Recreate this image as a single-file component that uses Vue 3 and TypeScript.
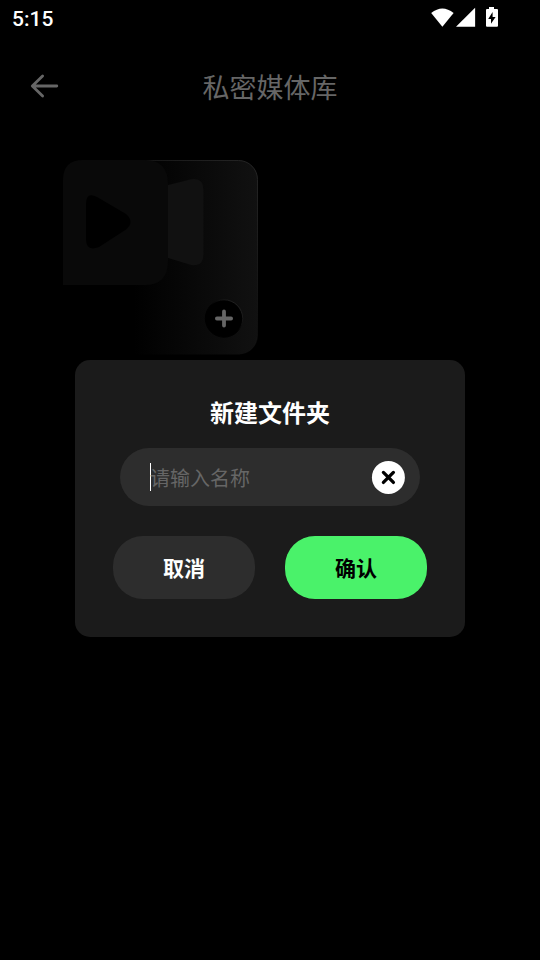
<script setup lang="ts">
import { ref } from 'vue'

const folderName = ref<string>('')

function clearName(): void {
  folderName.value = ''
}
</script>

<template>
  <div class="screen">
    <div class="status-bar">
      <span class="clock">5:15</span>
      <svg class="status-icons" width="68" height="22" viewBox="0 0 68 22" fill="#fff">
        <path d="M12.4 19.8 L1.2 6.1 Q12.4 -2.9 23.6 6.1 Z" />
        <path d="M26 19.8 L45.1 0.8 V19.8 Z" />
        <path
          fill-rule="evenodd"
          d="M59 0.1 h5 v2 h3 q1 0 1 1 V18.8 q0 1 -1 1 H57 q-1 0 -1 -1 V3.1 q0 -1 1 -1 h2 Z M62.6 5 L58.2 11.9 H61 V16.7 L65.6 9.9 H62.6 Z"
        />
      </svg>
    </div>

    <header class="app-bar">
      <svg class="back" width="30" height="26" viewBox="0 0 30 26">
        <path d="M12.6 3 L2.3 13 L12.6 23 M2.6 13 H26.8" fill="none" stroke="#666" stroke-width="2.8" stroke-linecap="round" stroke-linejoin="round" />
      </svg>
      <h1>私密媒体库</h1>
    </header>

    <main class="library">
      <div class="add-card">
        <svg class="artwork" width="195" height="195" viewBox="0 0 195 195">
          <defs>
            <linearGradient id="surface" x1="0" x2="1" y1="0" y2="0">
              <stop offset="0" stop-color="#000" />
              <stop offset="0.36" stop-color="#000" />
              <stop offset="0.7" stop-color="#090909" />
              <stop offset="1" stop-color="#111" />
            </linearGradient>
            <linearGradient id="edge" x1="0" x2="1" y1="1" y2="0">
              <stop offset="0.45" stop-color="#1b1b1b" stop-opacity="0" />
              <stop offset="0.8" stop-color="#1c1c1c" />
              <stop offset="1" stop-color="#252525" />
            </linearGradient>
            <linearGradient id="rim" x1="0" x2="1" y1="1" y2="0">
              <stop offset="0.5" stop-color="#000" />
              <stop offset="1" stop-color="#303030" />
            </linearGradient>
          </defs>
          <rect x="0.5" y="0.5" width="194" height="194" rx="19" fill="url(#surface)" stroke="url(#edge)" />
          <path d="M105 25 L128 19.2 Q140.5 17 140.5 30 V94 Q140.5 107 128 105 L105 98 Z" fill="#111" />
          <path d="M0 20 Q0 0 20 0 H82 Q105 0 105 24 V101 Q105 125 82 125 H0 Z" fill="#090909" />
          <path d="M23 44 Q23 31.5 34 37 L63 54 Q72 62 63 69.5 L36 87 Q23 92 23 79 Z" fill="#000" />
          <circle cx="161" cy="158.5" r="18.7" fill="#000" stroke="url(#rim)" />
          <path d="M161 151.4 V165.6 M153.9 158.5 H168.1" stroke="#656565" stroke-width="3.8" stroke-linecap="round" />
        </svg>
      </div>
    </main>

    <div class="overlay">
      <form class="dialog" role="dialog" @submit.prevent>
        <h2>新建文件夹</h2>
        <div class="field">
          <span class="caret"></span>
          <input v-model="folderName" type="text" placeholder="请输入名称" />
          <button class="clear" type="button" @click="clearName">
            <svg width="34" height="34" viewBox="0 0 34 34">
              <circle cx="17.4" cy="17.4" r="16.5" fill="#fff" />
              <path d="M12.4 12.4 L22.4 22.4 M22.4 12.4 L12.4 22.4" stroke="#000" stroke-width="3.3" stroke-linecap="round" />
            </svg>
          </button>
        </div>
        <div class="actions">
          <button class="action cancel" type="button">取消</button>
          <button class="action confirm" type="submit">确认</button>
        </div>
      </form>
    </div>
  </div>
</template>

<style>
body {
  background: #000;
}
</style>

<style scoped>
.screen {
  position: relative;
  width: 540px;
  height: 960px;
  overflow: hidden;
  background: #000;
  color: #fff;
  font-family: "Noto Sans CJK SC", sans-serif;
}

.screen * {
  box-sizing: border-box;
}

.status-bar {
  display: flex;
  align-items: flex-start;
  justify-content: space-between;
  height: 37px;
  padding: 7px 42px 0 12px;
}

.clock {
  font: 500 21px/24px Roboto, sans-serif;
}

.status-icons {
  display: block;
}

.app-bar {
  display: grid;
  grid-template-columns: 30px 1fr 30px;
  align-items: center;
  height: 98px;
  padding: 0 30px;
}

.back {
  display: block;
}

h1 {
  margin: 0;
  padding-top: 2px;
  color: #666;
  font-size: 27px;
  font-weight: 400;
  line-height: 40px;
  text-align: center;
}

.library {
  padding: 25px 63px;
}

.add-card {
  width: 195px;
  height: 195px;
}

.artwork {
  display: block;
}

.overlay {
  position: absolute;
  inset: 37px 0 0;
  display: flex;
  align-items: center;
  justify-content: center;
}

.dialog {
  display: flex;
  flex-direction: column;
  width: 390px;
  height: 277px;
  margin: 0;
  padding: 34px 38px 38px;
  border-radius: 15px;
  background: #1b1b1b;
}

h2 {
  margin: 0 0 18px;
  font-size: 24px;
  font-weight: 700;
  line-height: 36px;
  text-align: center;
}

.field {
  display: flex;
  align-items: center;
  height: 58px;
  margin: 0 7px 30px;
  padding: 0 15px 0 30px;
  border-radius: 29px;
  background: #2d2d2d;
}

.caret {
  width: 1px;
  height: 28px;
  background: #fff;
}

input {
  flex: 1;
  min-width: 0;
  margin-left: -1px;
  padding: 2px 0 0;
  border: 0;
  outline: 0;
  background: transparent;
  color: #fff;
  font: 400 20px/30px "Noto Sans CJK SC", sans-serif;
}

input::placeholder {
  color: #666;
  opacity: 1;
}

button {
  border: 0;
  padding: 0;
}

.clear {
  width: 34px;
  height: 34px;
  background: transparent;
}

.clear svg {
  display: block;
}

.actions {
  display: flex;
  gap: 30px;
}

.action {
  flex: 1;
  height: 63px;
  padding-bottom: 2px;
  border-radius: 30px;
  font: 700 21px/30px "Noto Sans CJK SC", sans-serif;
}

.cancel {
  background: #2d2d2d;
  color: #fff;
}

.confirm {
  background: #4af26a;
  color: #000;
}
</style>
